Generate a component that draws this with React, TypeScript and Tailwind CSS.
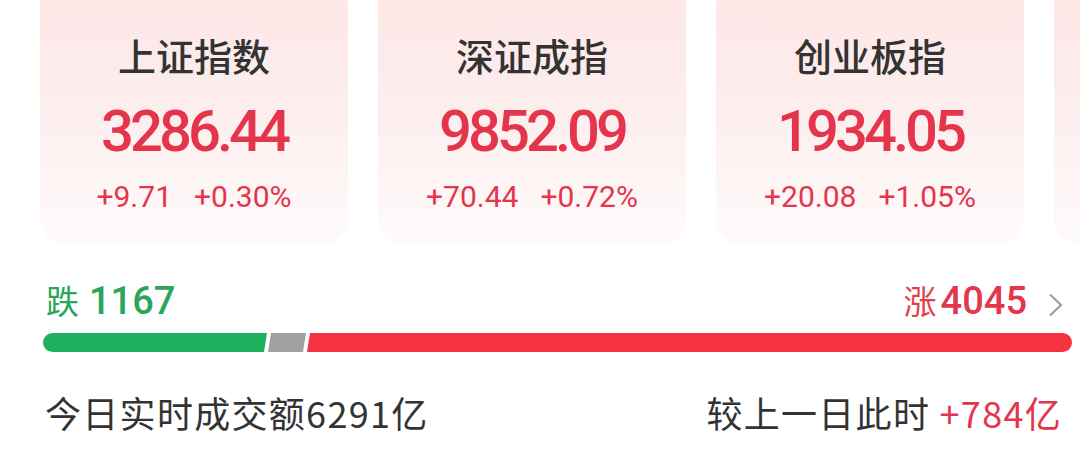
import React from "react";

const cards = [
  { name: "上证指数", value: "3286.44", ch: "+9.71", pct: "+0.30%" },
  { name: "深证成指", value: "9852.09", ch: "+70.44", pct: "+0.72%" },
  { name: "创业板指", value: "1934.05", ch: "+20.08", pct: "+1.05%" },
];

export default function App() {
  return (
    <div className="w-[1080px] h-[457px] overflow-hidden bg-white font-['Noto_Sans_CJK_SC',sans-serif]">
      <div className="flex gap-[30px] pl-[40px] -mt-[20px]">
        {cards.map((c) => (
          <div
            key={c.name}
            className="w-[308px] shrink-0 h-[265px] rounded-[26px] bg-linear-to-b from-[#fde5e5] via-[#fdeeee] to-[#fffbfb] flex flex-col items-center pt-[56px]"
          >
            <div className="text-[38px] leading-none font-medium text-[#333333]">{c.name}</div>
            <div className="mt-[28px] text-[58px] leading-none font-medium tracking-[-4px] text-[#e5354c] font-['Roboto',sans-serif]">
              {c.value}
            </div>
            <div className="mt-[22px] flex gap-[22px] text-[30px] leading-none text-[#e5354c] font-['Roboto',sans-serif]">
              <span>{c.ch}</span>
              <span>{c.pct}</span>
            </div>
          </div>
        ))}
        <div className="w-[308px] shrink-0 h-[265px] rounded-[26px] bg-linear-to-b from-[#fde5e5] via-[#fdeeee] to-[#fffbfb]" />
      </div>

      <div className="pl-[43px] pr-[8px] mt-[37px]">
        <div className="flex justify-between items-baseline pr-[9px] h-[38px]">
          <div className="flex items-baseline pl-[3px]">
            <span className="text-[33px] leading-none text-[#2aa65a]">跌</span>
            <span className="ml-[10px] text-[38px] leading-none font-medium text-[#2aa65a] font-['Roboto',sans-serif]">1167</span>
          </div>
          <div className="flex items-baseline">
            <span className="text-[33px] leading-none text-[#e3404f]">涨</span>
            <span className="ml-[4px] text-[38px] leading-none font-medium text-[#e3354c] font-['Roboto',sans-serif]">4045</span>
            <svg width="15" height="24" viewBox="0 0 15 24" className="ml-[21px] self-center mt-[8px]">
              <polyline points="2,1.5 13,12 2,22.5" fill="none" stroke="#999999" strokeWidth="2" strokeLinejoin="miter" />
            </svg>
          </div>
        </div>

        <svg width="1029" height="19" viewBox="0 0 1029 19" className="mt-[13px] block">
          <path d="M9.5 0 L224 0 L221 19 L9.5 19 A9.5 9.5 0 0 1 9.5 0 Z" fill="#1fb15d" />
          <path d="M228 0 L263 0 L260 19 L225 19 Z" fill="#a0a0a0" />
          <path d="M267 0 L1019.5 0 A9.5 9.5 0 0 1 1019.5 19 L264 19 Z" fill="#f5323f" />
        </svg>

        <div className="mt-[42px] flex justify-between pr-[10px] text-[36px] leading-none tracking-[1.3px] text-[#333333]">
          <span className="pl-[2px]">今日实时成交额6291亿</span>
          <span>
            较上一日此时 <span className="text-[#e5354c]">+784亿</span>
          </span>
        </div>
      </div>
    </div>
  );
}
